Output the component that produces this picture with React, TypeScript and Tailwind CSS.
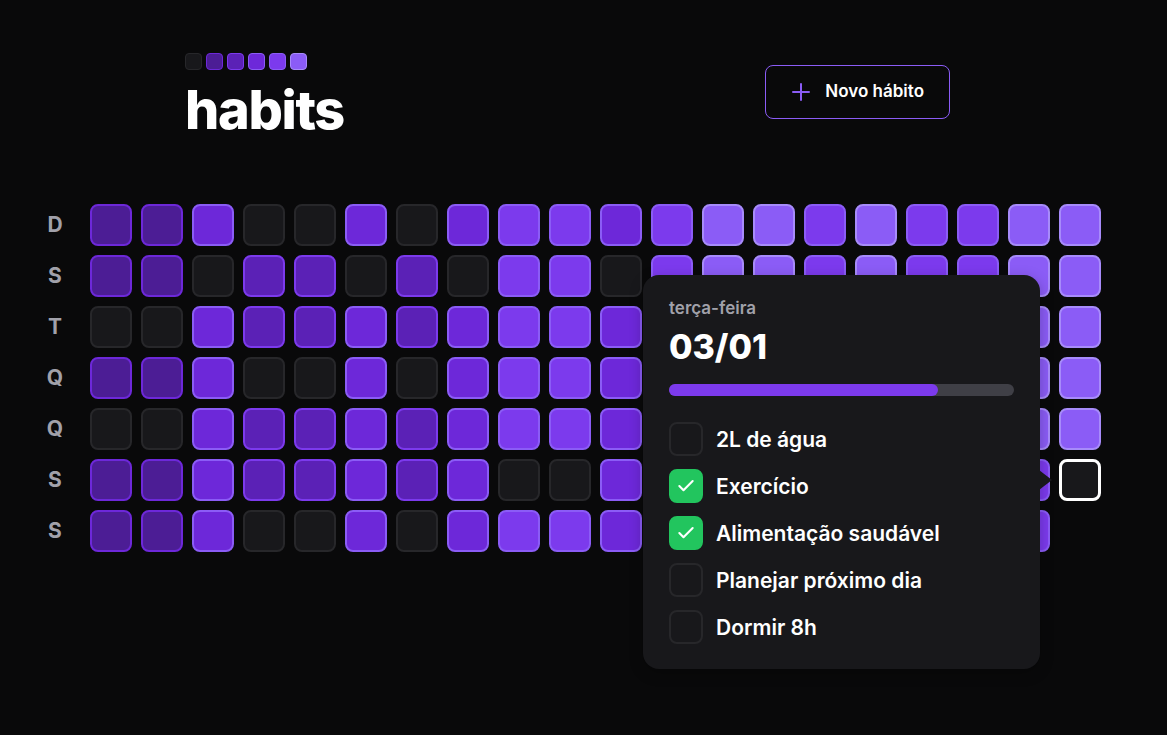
import { Check } from 'lucide-react'

const levels = [
  'bg-[#18181b] border-[#27272a]',
  'bg-[#4c1d95] border-[#6d28d9]',
  'bg-[#5b21b6] border-[#7c3aed]',
  'bg-[#6d28d9] border-[#8b5cf6]',
  'bg-[#7c3aed] border-[#8b5cf6]',
  'bg-[#8b5cf6] border-[#a78bfa]',
]

// -1 = today, -2 = no cell
const weeks: number[][] = [
  [1, 1, 3, 0, 0, 3, 0, 3, 4, 4, 3, 4, 5, 5, 4, 5, 4, 4, 5, 5],
  [1, 1, 0, 2, 2, 0, 2, 0, 4, 4, 0, 4, 5, 5, 4, 5, 4, 4, 5, 5],
  [0, 0, 3, 2, 2, 3, 2, 3, 4, 4, 3, 4, 5, 5, 4, 5, 4, 4, 5, 5],
  [1, 1, 3, 0, 0, 3, 0, 3, 4, 4, 3, 4, 5, 5, 4, 5, 4, 4, 5, 5],
  [0, 0, 3, 2, 2, 3, 2, 3, 4, 4, 3, 4, 5, 5, 4, 5, 4, 4, 5, 5],
  [1, 1, 3, 2, 2, 3, 2, 3, 0, 0, 3, 4, 5, 5, 4, 5, 4, 4, 4, -1],
  [1, 1, 3, 0, 0, 3, 0, 3, 4, 4, 3, 4, 5, 5, 4, 5, 4, 4, 4, -2],
]

const weekDays = ['D', 'S', 'T', 'Q', 'Q', 'S', 'S']

const habits = [
  { title: '2L de água', done: false },
  { title: 'Exercício', done: true },
  { title: 'Alimentação saudável', done: true },
  { title: 'Planejar próximo dia', done: false },
  { title: 'Dormir 8h', done: false },
]

function Logo() {
  return (
    <div className="flex gap-[4px]">
      {levels.map((l, i) => (
        <div key={i} className={`h-[17px] w-[17px] rounded-[4px] border-[1.5px] ${l}`} />
      ))}
    </div>
  )
}

function Cell({ level }: { level: number }) {
  if (level === -2) return <div className="h-[42px] w-[42px]" />
  if (level === -1)
    return <div className="h-[42px] w-[42px] rounded-lg border-[3px] border-white bg-[#18181b]" />
  return <div className={`h-[42px] w-[42px] rounded-lg border-2 ${levels[level]}`} />
}

export default function App() {
  return (
    <div className="relative h-[735px] w-full overflow-hidden bg-[#09090a] font-['Inter',sans-serif] text-white">
      <header className="ml-[184px] flex w-[766px] items-start justify-between pl-[1px] pt-[53px]">
        <div>
          <Logo />
          <h1 className="mt-[13px] text-[54px] font-extrabold leading-none tracking-[-0.025em]">habits</h1>
        </div>
        <button className="mt-[12px] flex h-[54px] items-center gap-[15px] rounded-lg border border-[#8b5cf6] pl-[26px] pr-[25px] text-[17px] font-semibold">
          <svg width="18" height="18" viewBox="0 0 18 18" fill="none" stroke="#8b5cf6" strokeWidth="2" strokeLinecap="round">
            <path d="M9 1v16M1 9h16" />
          </svg>
          Novo hábito
        </button>
      </header>

      <section className="mt-[67px] flex gap-[14px] pl-[34px]">
        <div className="grid grid-rows-7 gap-[9px]">
          {weekDays.map((d, i) => (
            <div key={i} className="flex h-[42px] w-[42px] items-center justify-center text-[21px] font-bold text-[#a1a1aa]">
              {d}
            </div>
          ))}
        </div>
        <div className="grid grid-flow-col grid-rows-7 gap-[9px]">
          {weeks[0].map((_, col) =>
            weeks.map((row, r) => <Cell key={`${col}-${r}`} level={row[col]} />)
          )}
        </div>
      </section>

      <div className="absolute left-[643px] top-[275px] w-[397px] rounded-2xl bg-[#18181b] px-[26px] pb-[25px] pt-[21px] shadow-[0_4px_14px_rgba(0,0,0,0.25)]">
        <span className="block text-[17px] font-semibold leading-6 text-[#a1a1aa]">terça-feira</span>
        <span className="mt-[4px] block text-[34px] font-extrabold leading-[45px]">03/01</span>
        <div className="mt-[15px] h-3 w-full rounded-full bg-[#3f3f46]">
          <div className="h-3 rounded-full bg-[#7c3aed]" style={{ width: '78%' }} />
        </div>
        <div className="mt-[26px] flex flex-col gap-[13px]">
          {habits.map(h => (
            <div key={h.title} className="flex items-center gap-[13px]">
              <div
                className={`flex h-[34px] w-[34px] items-center justify-center rounded-lg border-2 ${
                  h.done ? 'border-[#22c55e] bg-[#22c55e]' : 'border-[#27272a] bg-[#18181b]'
                }`}
              >
                {h.done && <Check size={20} strokeWidth={2.5} className="text-white" />}
              </div>
              <span className="text-[21px] font-semibold leading-none">{h.title}</span>
            </div>
          ))}
        </div>
        <svg className="absolute right-[-12px] top-[195px]" width="13" height="20" viewBox="0 0 13 20">
          <path d="M0 0L13 10L0 20Z" fill="#18181b" />
        </svg>
      </div>
    </div>
  )
}
